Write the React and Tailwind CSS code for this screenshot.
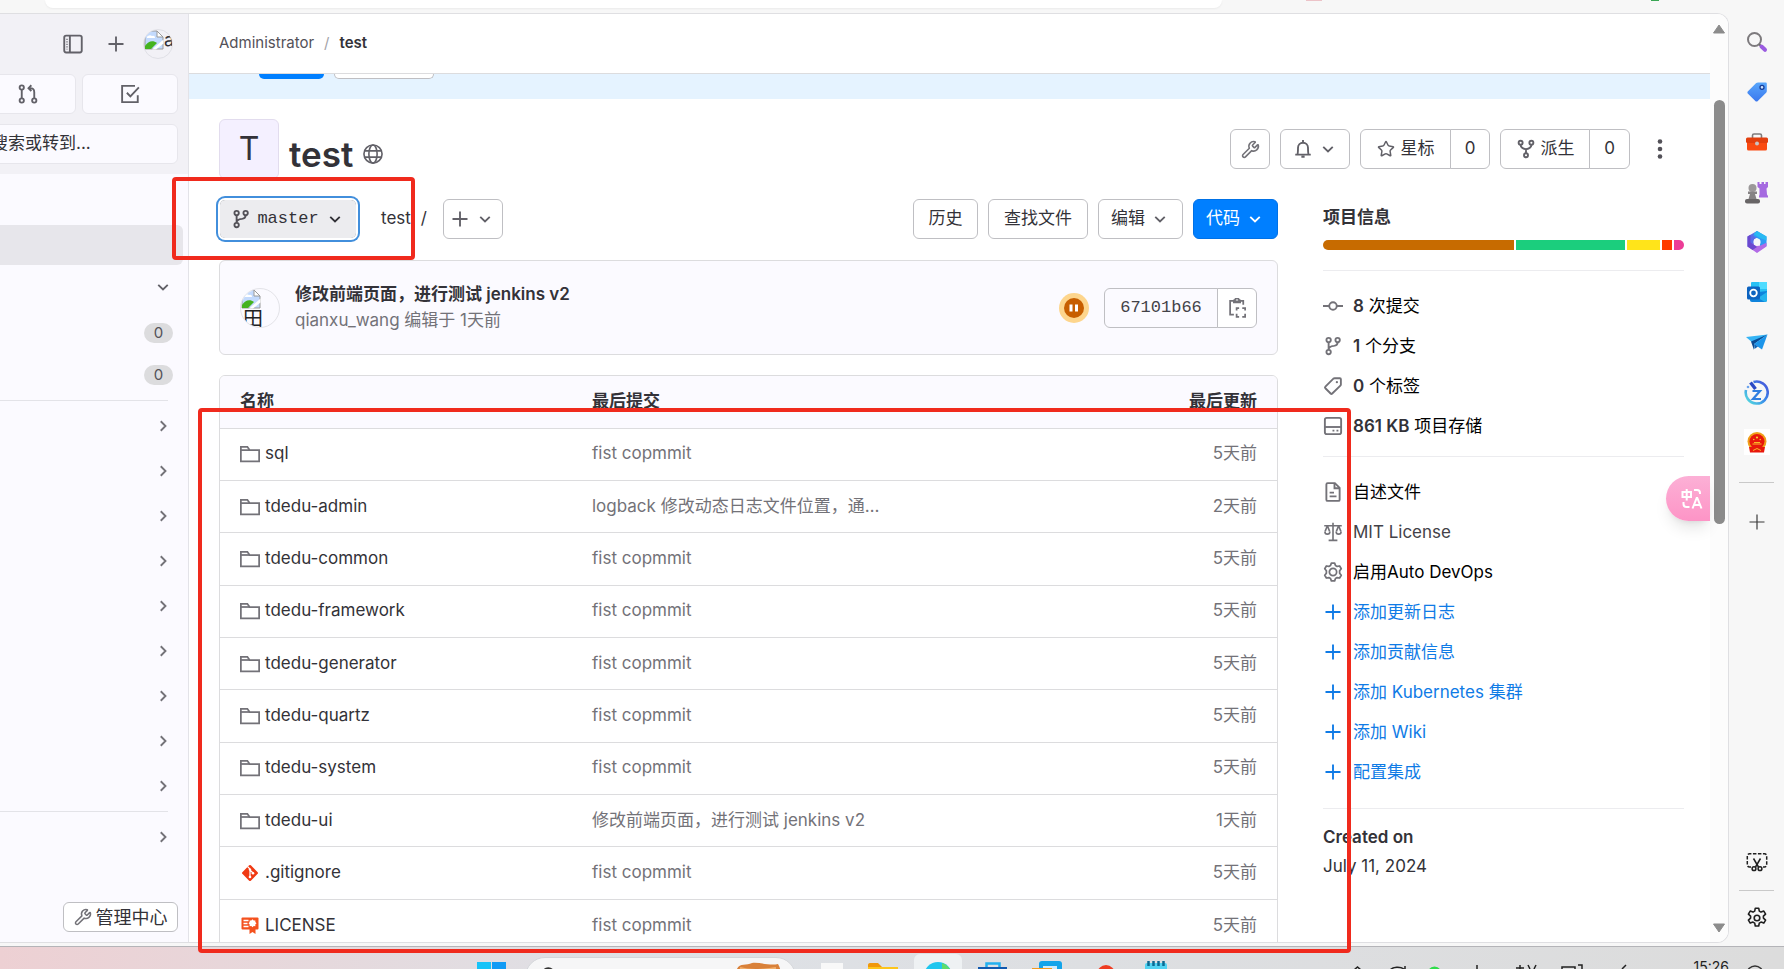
import React from "react";
import { Wrench, Star, Search } from "lucide-react";

function Icon({ children, className = "", size = 20, sw = 1.5 }) {
  return (
    <svg
      width={size}
      height={size}
      viewBox="0 0 16 16"
      fill="none"
      stroke="currentColor"
      strokeWidth={sw}
      className={`shrink-0 ${className}`}
      aria-hidden="true"
    >
      {children}
    </svg>
  );
}

const ChevronDown = ({ className }) => (
  <Icon className={className}>
    <path d="M4.2 6.3 8 10l3.8-3.7" />
  </Icon>
);
const ChevronRight = () => (
  <Icon className="text-[#737278]">
    <path d="M6.2 4.2 10 8l-3.8 3.8" />
  </Icon>
);
const Plus = ({ className }) => (
  <Icon className={className}>
    <path d="M8 2v12M2 8h12" />
  </Icon>
);
const Branch = ({ className }) => (
  <Icon className={className}>
    <circle cx="4.5" cy="3.2" r="1.75" />
    <circle cx="11.7" cy="3.2" r="1.75" />
    <circle cx="4.5" cy="12.8" r="1.75" />
    <path d="M4.5 5v6M11.7 5c0 2.2-1 2.7-3 2.9C6 8.100 4.500 8.800 4.500 11" />
  </Icon>
);
const Fork = ({ className }) => (
  <Icon className={className}>
    <circle cx="3.700" cy="3" r="1.600" />
    <circle cx="12.300" cy="3" r="1.600" />
    <circle cx="8" cy="13" r="1.600" />
    <path d="M3.700 4.600c0 2.400 1.300 3.100 4.300 3.600 3-.5 4.300-1.200 4.300-3.600M8 8.200v3.200" />
  </Icon>
);
const MergeRequest = ({ className }) => (
  <Icon className={className}>
    <circle cx="3" cy="2.800" r="1.700" />
    <circle cx="3" cy="13.200" r="1.700" />
    <circle cx="13" cy="13.200" r="1.700" />
    <path d="M3 4.500v7M13 11.500V6.500c0-2-1-3.200-3.300-3.200H8.500M10.700 1 8.400 3.300l2.300 2.300" />
  </Icon>
);
const Todo = ({ className }) => (
  <Icon className={className}>
    <path d="M12 1.500H1.700v13h12.500V9" />
    <path d="m5.500 7 2.800 2.900 6.800-7.200" />
  </Icon>
);
const Panel = ({ className }) => (
  <Icon className={className}>
    <rect x="1" y="1.250" width="14" height="13.500" rx="1.500" />
    <path d="M5.500 1.500v13" />
    <path d="M3.200 3.800v8.500" strokeWidth="1" strokeDasharray="1 1" />
  </Icon>
);
const Globe = ({ className }) => (
  <Icon className={className} sw={1.3}>
    <circle cx="8" cy="8" r="7.250" />
    <ellipse cx="8" cy="8" rx="3.300" ry="7.250" />
    <path d="M1.200 5.500h13.600M1.200 10.500h13.600" />
  </Icon>
);
const Bell = ({ className }) => (
  <Icon className={className}>
    <path d="M8 .800v1.500M1.800 12.500h12.400M3.500 12.500c.500-1 .500-2 .500-5.500a4 4 0 0 1 8 0c0 3.500 0 4.500.500 5.500M6.700 14.200h2.600" />
  </Icon>
);
const Commit = ({ className }) => (
  <Icon className={className}>
    <circle cx="8" cy="8" r="3" />
    <path d="M0 8h5M11 8h5" />
  </Icon>
);
const Tag = ({ className }) => (
  <Icon className={className}>
    <path d="M9.300 1.750h4.200c.5 0 .8.300.8.800v4.200c0 .4-.1.700-.4 1L7.400 14c-.4.400-.9.400-1.300 0L1.900 9.800c-.4-.4-.4-.9 0-1.300l6.400-6.400c.3-.2.600-.350 1-.350z" />
    <circle cx="11.100" cy="4.900" r=".9" fill="currentColor" stroke="none" />
  </Icon>
);
const Disk = ({ className }) => (
  <Icon className={className}>
    <rect x="1.500" y="1.500" width="13" height="13" rx="1.500" />
    <path d="M1.500 8.800h13" />
    <path d="M7.600 11.700h1.500M10.800 11.700h1.500" />
  </Icon>
);
const Doc = ({ className }) => (
  <Icon className={className}>
    <path d="M9.500.9H3.700c-.5 0-1 .4-1 1v12.200c0 .6.500 1 1 1h8.600c.5 0 1-.4 1-1V4.700z" />
    <path d="M9.200 1v4h4M5.300 8.500h3.500M5.300 11.500h5.500" />
  </Icon>
);
const Scale = ({ className }) => (
  <Icon className={className} sw={1.3}>
    <path d="M8 0.500v14M4.500 14.700h7M1 3h14M3.500 3 1.700 7.500M3.500 3l1.800 4.500M12.500 3l-1.800 4.500M12.500 3l1.800 4.500" />
    <path d="M1.500 7.500a2 2.200 0 0 0 4 0M10.500 7.500a2 2.200 0 0 0 4 0" />
  </Icon>
);
const Gear = ({ className }) => (
  <Icon className={className} sw={1.4}>
    <circle cx="8" cy="8" r="2.900" />
    <path d="M6.700.9h2.600l.7 1.900 1.300.750 2-.350 1.300 2.200-1.300 1.600v2l1.300 1.600-1.300 2.200-2-.350-1.300.750-.7 1.900H6.700L6 13.200l-1.300-.750-2 .350-1.300-2.200L2.700 9V7L1.400 5.400l1.300-2.200 2 .350L6 2.800z" strokeLinejoin="round" />
  </Icon>
);
const Clipboard = ({ className }) => (
  <Icon className={className} sw={1.4}>
    <path d="M5 2.300H2.500v11h3M11 2.300h2v3M5.300 2.700h5.400M5.500 3.500V2c0-.5.500-.6 1-.7a1.600 1.600 0 0 1 3 0c.5.100 1 .200 1 .700v1.500z" />
    <path d="M7.700 10V8h2M12.200 8h2.300v2M14.500 12.500V15h-2.300M9.700 15h-2v-2.500" />
  </Icon>
);
const Folder = () => (
  <Icon className="text-[#737278]" sw={1.4}>
    <path d="M.7 13.800V2.200h5.200l1.800 2.600h7.600v9z" />
    <path d="M.7 4.800h7" />
  </Icon>
);
const GitFile = () => (
  <svg width="20" height="20" viewBox="0 0 20 20" aria-hidden="true" className="shrink-0">
    <rect x="4" y="4" width="12" height="12" rx="1.200" transform="rotate(45 10 10)" fill="#f03a13" />
    <path d="M7.500 3.500 10 6v8.500M10 7l3 3" stroke="#fff" strokeWidth="1.200" fill="none" />
    <circle cx="10" cy="14" r="1.300" fill="#fff" />
    <circle cx="13" cy="10.300" r="1.300" fill="#fff" />
    <circle cx="10" cy="6.600" r="1.200" fill="#fff" />
  </svg>
);
const LicenseFile = () => (
  <svg width="20" height="20" viewBox="0 0 20 20" aria-hidden="true" className="shrink-0">
    <rect x="1.500" y="2.500" width="17" height="12" rx="1" fill="#f4511e" />
    <path d="M3.500 5.500h5M3.500 8.500h4M3.500 11.500h5" stroke="#fff" strokeWidth="1.300" />
    <path d="M9.500 11h6v8l-3-2-3 2z" fill="#f4511e" />
    <path d="m12.500 4.300 1.200 1.200 1.700-.1-.1 1.700 1.200 1.200-1.200 1.200.1 1.700-1.700-.1-1.200 1.200-1.200-1.200-1.700.1.1-1.700-1.200-1.200 1.200-1.200-.1-1.700 1.700.1z" fill="#fff" />
  </svg>
);

const BrokenImage = () => (
  <svg width="20" height="20" viewBox="0 0 20 20" aria-hidden="true" className="shrink-0">
    <path d="M1 1h12l6 6v12H1z" fill="#c3dafd" stroke="#9a9a9a" />
    <path d="M13 1v6h6z" fill="#fff" stroke="#9a9a9a" />
    <path d="M3 8a3 2 0 0 1 5-2 2 2 0 0 1 3 2z" fill="#fff" />
    <path d="M1 19v-3c3-5 8-6 12-3l-6 6z" fill="#45b31f" />
    <path d="m8 19.500 11.500-10v4L12 19.500z" fill="#fff" />
  </svg>
);

const files = [
  ["sql", "fist copmmit", "5天前"],
  ["tdedu-admin", "logback 修改动态日志文件位置，通…", "2天前"],
  ["tdedu-common", "fist copmmit", "5天前"],
  ["tdedu-framework", "fist copmmit", "5天前"],
  ["tdedu-generator", "fist copmmit", "5天前"],
  ["tdedu-quartz", "fist copmmit", "5天前"],
  ["tdedu-system", "fist copmmit", "5天前"],
  ["tdedu-ui", "修改前端页面，进行测试 jenkins v2", "1天前"],
  [".gitignore", "fist copmmit", "5天前", GitFile],
  ["LICENSE", "fist copmmit", "5天前", LicenseFile],
];

function SideNav() {
  return (
    <aside className="flex w-[189px] shrink-0 flex-col overflow-hidden border-r border-[#e3e3e8] bg-[#fbfaff]">
      <div className="bg-[#f2f1f6] pt-[15px] pb-2.5 text-[#626168]">
        <div className="flex h-[30px] items-center justify-end gap-[11px] pr-[15px]">
          <button aria-label="切换侧边栏" className="flex size-8 items-center justify-center">
            <Panel />
          </button>
          <button aria-label="新建" className="flex size-8 items-center justify-center">
            <Plus />
          </button>
          <button className="flex size-[30px] items-start overflow-hidden rounded-full border border-[#e0e0e6] text-[18px] leading-5 text-[#333238]">
            <BrokenImage />a
          </button>
        </div>
        <div className="mt-[15px] mr-2.5 -ml-5 grid grid-cols-2 gap-1.5">
          <button aria-label="合并请求" className="flex h-10 items-center justify-center rounded-md border border-[#e7e6ec] bg-[#fbfaff]">
            <MergeRequest />
          </button>
          <button aria-label="待办事项" className="flex h-10 items-center justify-center rounded-md border border-[#e7e6ec] bg-[#fbfaff]">
            <Todo />
          </button>
        </div>
        <button className="mt-2.5 -ml-5 flex h-10 w-[198px] items-center rounded-md border border-[#e7e6ec] bg-[#fbfaff] pl-2.5 text-[17px] text-[#333238]">
          搜索或转到...
        </button>
      </div>
      <nav className="flex flex-1 flex-col">
        <a href="#project" aria-label="test" className="mt-[51px] mr-[5px] h-10 rounded-r-md bg-[#e7e6eb]" />
        <button aria-label="已置顶" className="mt-0.5 flex h-10 items-center justify-end pr-[15px] text-[#626168]">
          <ChevronDown />
        </button>
        <div className="mt-1.5 flex flex-col gap-0.5">
          {["issues", "merge"].map((k) => (
            <a key={k} href={`#${k}`} className="flex h-10 items-center justify-end pr-[15px]">
              <span className="flex h-5 w-[29px] items-center justify-center rounded-full bg-[#dcdcde] text-[15px] text-[#535158]">0</span>
            </a>
          ))}
        </div>
        <hr className="mt-[5px] mr-5 mb-0.5 border-[#e3e3e8]" />
        {["管理", "计划", "代码", "构建", "安全", "部署", "运维", "监控", "分析"].map((k) => (
          <button key={k} aria-label={k} className="flex h-[45px] items-center justify-end pr-[15px]">
            <ChevronRight />
          </button>
        ))}
        <hr className="mt-[3px] mr-5 mb-0.5 border-[#e3e3e8]" />
        <button aria-label="设置" className="flex h-[45px] items-center justify-end pr-[15px]">
          <ChevronRight />
        </button>
        <a href="#admin" className="mt-auto mr-2.5 mb-2.5 ml-auto flex h-[30px] w-[115px] items-center justify-center gap-1 rounded-md border border-[#bfbfc3] bg-white text-[18px] whitespace-nowrap text-[#333238]">
          <Wrench size={18} className="text-[#737278]" />
          管理中心
        </a>
      </nav>
    </aside>
  );
}

const btn = "flex h-10 items-center justify-center rounded-md border border-[#bfbfc3] bg-white text-[17px] whitespace-nowrap text-[#333238]";

function ProjectHeader() {
  return (
    <div className="flex h-[60px] items-start">
      <div className="flex size-[60px] items-center justify-center rounded-md border border-[#e2dcee] bg-[#f4f0ff] text-[32px] text-[#333238]">T</div>
      <h1 className="ml-2.5 pt-[13px] text-[35px] leading-[44px] font-semibold text-[#333238]">test</h1>
      <Globe className="mt-[25px] ml-2.5 text-[#626168]" />
      <div className="mt-2.5 mr-1 ml-auto flex gap-2.5">
        <button aria-label="设置" className={`${btn} w-10`}>
          <Wrench size={19} className="text-[#737278]" />
        </button>
        <button aria-label="通知" className={`${btn} w-[70px] gap-[5px]`}>
          <Bell className="text-[#626168]" />
          <ChevronDown className="text-[#626168]" />
        </button>
        <div className="flex">
          <button className={`${btn} w-[91px] gap-1.5 rounded-r-none`}>
            <Star size={18} className="text-[#626168]" />
            星标
          </button>
          <a href="#stars" className={`${btn} -ml-px w-10 rounded-l-none`}>0</a>
        </div>
        <div className="flex">
          <button className={`${btn} w-[90px] gap-[5px] rounded-r-none`}>
            <Fork className="text-[#626168]" />
            派生
          </button>
          <a href="#forks" className={`${btn} -ml-px w-[41px] rounded-l-none`}>0</a>
        </div>
        <button aria-label="更多操作" className="flex h-10 w-10 items-center justify-center text-[#535158]">
          <svg width="20" height="20" viewBox="0 0 20 20" fill="currentColor">
            <circle cx="10" cy="2.500" r="2.300" />
            <circle cx="10" cy="10" r="2.300" />
            <circle cx="10" cy="17.500" r="2.300" />
          </svg>
        </button>
      </div>
    </div>
  );
}

function RepoBar() {
  return (
    <div className="flex h-10 items-center">
      <button className="flex h-10 w-[138px] items-center justify-center gap-1.5 rounded-md border border-[#737278] bg-[#ececef] font-['Liberation_Mono',monospace] text-[17px] text-[#333238] ring-3 ring-[#428fdc] outline-2 -outline-offset-1 outline-white">
        <Branch className="text-[#535158]" />
        master
        <ChevronDown />
      </button>
      <div className="ml-6 flex items-center gap-2.5 text-[17px] text-[#333238]">
        <a href="#root">test</a>
        <span>/</span>
      </div>
      <button aria-label="添加" className={`${btn} ml-4 w-[60px] gap-[5px]`}>
        <Plus className="text-[#626168]" />
        <ChevronDown className="text-[#626168]" />
      </button>
      <div className="ml-auto flex gap-2.5">
        <a href="#history" className={`${btn} w-[65px]`}>历史</a>
        <a href="#find" className={`${btn} w-[100px]`}>查找文件</a>
        <button className={`${btn} w-[85px] gap-[5px]`}>
          编辑
          <ChevronDown className="text-[#626168]" />
        </button>
        <button className="flex h-10 w-[85px] items-center justify-center gap-[5px] rounded-md border border-[#0071e6] bg-[#007fff] text-[17px] text-white">
          代码
          <ChevronDown />
        </button>
      </div>
    </div>
  );
}

function CommitCard() {
  return (
    <section className="mt-[21px] flex h-[95px] items-center rounded-md border border-[#dcdcde] bg-[#fbfaff] px-5">
      <div className="flex size-10 flex-col overflow-hidden rounded-full border border-[#e3e3e8] text-[20px] leading-5 text-[#222]">
        <BrokenImage />
        <span className="pl-0.5">田</span>
      </div>
      <div className="ml-[15px] pb-0.5 text-[17px] leading-[26px]">
        <a href="#commit" className="block font-semibold text-[#333238]">修改前端页面，进行测试 jenkins v2</a>
        <p className="text-[#737278]">qianxu_wang 编辑于 1天前</p>
      </div>
      <svg width="30" height="30" viewBox="0 0 30 30" className="ml-auto" role="img" aria-label="流水线等待中">
        <circle cx="15" cy="15" r="15" fill="#fdd58d" />
        <circle cx="15" cy="15" r="10" fill="#c75e00" />
        <path d="M12 11.500v7M17.500 11.500v7" stroke="#fff" strokeWidth="3" />
      </svg>
      <div className="ml-[15px] flex">
        <span className="flex h-10 w-[114px] items-center justify-center rounded-l-md border border-[#bfbfc3] font-['Liberation_Mono',monospace] text-[17px] text-[#434248]">67101b66</span>
        <button aria-label="复制提交 SHA" className="-ml-px flex h-10 w-10 items-center justify-center rounded-r-md border border-[#bfbfc3] bg-white text-[#737278]">
          <Clipboard />
        </button>
      </div>
    </section>
  );
}

function FileTable() {
  return (
    <div className="mt-5 overflow-hidden rounded-t-md border border-[#dcdcde]">
      <table className="h-[576px] w-full table-fixed text-left text-[17px]">
        <thead className="bg-[#fbfaff] font-semibold text-[#333238]">
          <tr className="border-b border-[#dcdcde]">
            <th className="h-[52px] w-[352px] pl-5 font-semibold">名称</th>
            <th className="pl-5 font-semibold">最后提交</th>
            <th className="w-[260px] pr-5 text-right font-semibold">最后更新</th>
          </tr>
        </thead>
        <tbody>
          {files.map(([name, msg, when, FileIcon = Folder]) => (
            <tr key={name} className="border-b border-[#dcdcde]">
              <td className="pl-5">
                <a href={`#${name}`} className="flex items-center gap-[5px] text-[#333238]">
                  <FileIcon />
                  {name}
                </a>
              </td>
              <td className="pl-5 text-[#737278]">{msg}</td>
              <td className="pr-5 text-right text-[#737278]">{when}</td>
            </tr>
          ))}
        </tbody>
      </table>
    </div>
  );
}

const languages = [
  ["Java", "190fr", "#c76b00"],
  ["Vue", "109fr", "#1bce7d"],
  ["JavaScript", "33fr", "#ffe41a"],
  ["HTML", "10fr", "#ff3b00"],
  ["SCSS", "10fr", "#ec3d97"],
];

function InfoRow({ icon: I, color = "text-black", iconColor = "text-[#737278]", children }) {
  return (
    <a href="#info" className={`flex h-10 items-center gap-2.5 text-[17px] ${color}`}>
      <I className={iconColor} />
      <span>{children}</span>
    </a>
  );
}

function ProjectInfo() {
  const add = ["添加更新日志", "添加贡献信息", "添加 Kubernetes 集群", "添加 Wiki", "配置集成"];
  return (
    <aside className="w-[361px] shrink-0 pt-1.5 text-[17px] leading-6 text-[#333238]">
      <h2 className="font-semibold">项目信息</h2>
      <div
        className="mt-[11px] grid h-2.5 gap-0.5 overflow-hidden rounded-full"
        style={{ gridTemplateColumns: languages.map((l) => l[1]).join(" ") }}
      >
        {languages.map(([name, , color]) => (
          <span key={name} title={name} style={{ background: color }} />
        ))}
      </div>
      <hr className="mt-5 mb-[15px] border-[#ececef]" />
      <InfoRow icon={Commit}><b className="font-semibold text-[#333238]">8</b> 次提交</InfoRow>
      <InfoRow icon={Branch}><b className="font-semibold text-[#333238]">1</b> 个分支</InfoRow>
      <InfoRow icon={Tag}><b className="font-semibold text-[#333238]">0</b> 个标签</InfoRow>
      <InfoRow icon={Disk}><b className="font-semibold text-[#333238]">861 KB</b> 项目存储</InfoRow>
      <hr className="mt-2.5 mb-[15px] border-[#ececef]" />
      <InfoRow icon={Doc}>自述文件</InfoRow>
      <InfoRow icon={Scale} color="text-[#434248]">MIT License</InfoRow>
      <InfoRow icon={Gear}>启用Auto DevOps</InfoRow>
      {add.map((t) => (
        <InfoRow key={t} icon={Plus} color="text-[#0f7be6]" iconColor="text-[#0f7be6]">{t}</InfoRow>
      ))}
      <hr className="mt-4 mb-4 border-[#ececef]" />
      <h3 className="font-semibold">Created on</h3>
      <p className="mt-[5px]">July 11, 2024</p>
    </aside>
  );
}

function EdgeBar() {
  const item = "flex h-[50px] items-center justify-center";
  return (
    <aside className="flex w-[55px] shrink-0 flex-col pt-1">
      <button aria-label="搜索" className={item}>
        <svg width="22" height="22" viewBox="0 0 22 22" fill="none">
          <circle cx="8.500" cy="8.500" r="6.500" stroke="#7d7a7d" strokeWidth="2" />
          <path d="m13.200 13.200 2.500 2.500" stroke="#6d6a6d" strokeWidth="2" />
          <path d="m15.500 15.500 3.500 3.300" stroke="#9a5be0" strokeWidth="4" strokeLinecap="round" />
        </svg>
      </button>
      <button aria-label="购物" className={item}>
        <svg width="22" height="22" viewBox="0 0 22 22">
          <defs><linearGradient id="tg" x1="0" y1="0" x2="0" y2="1"><stop stopColor="#58a6fb" /><stop offset="1" stopColor="#3b78ee" /></linearGradient></defs>
          <path d="M12 1.500h7.500c.8 0 1.300.5 1.300 1.300V10c0 .7-.2 1.200-.7 1.700l-8.300 8.300c-.8.800-1.700.8-2.500 0L2 12.800c-.8-.8-.8-1.700 0-2.500l8.200-8.200c.5-.4 1.100-.6 1.800-.6z" fill="url(#tg)" />
          <circle cx="16" cy="6.300" r="2" fill="#cfe4ff" stroke="#163c96" strokeWidth="1.300" />
        </svg>
      </button>
      <button aria-label="工具" className={item}>
        <svg width="22" height="20" viewBox="0 0 22 20">
          <path d="M6.500 6V3.500c0-1 .5-1.500 1.500-1.500h6c1 0 1.500.5 1.500 1.500V6" fill="none" stroke="#7f7b7b" strokeWidth="1.600" />
          <rect x="1" y="8" width="20" height="10.500" rx="1.500" fill="#fa4b12" />
          <rect x="0" y="5.500" width="22" height="5.500" rx="1.500" fill="#e23f0e" />
          <circle cx="11" cy="11.500" r="2" fill="#c9c3c3" />
        </svg>
      </button>
      <button aria-label="游戏" className={item}>
        <svg width="23" height="23" viewBox="0 0 23 23">
          <path d="M12.500 1h2v2h2V1h2.500v2h1.500V1H23v5l-1.500 1.500.5 6 1 1.500v1.500h-9V15l.5-1.500V7.500L12.500 6z" fill="#a56ae0" />
          <circle cx="7.500" cy="7" r="4" fill="#9b9899" />
          <path d="M3 10.500h9v2.500h-2l1.500 5h-8l1.500-5H3z" fill="#858283" />
          <rect x="0" y="18" width="15" height="4.500" rx="2" fill="#686566" />
        </svg>
      </button>
      <button aria-label="Microsoft 365" className={item}>
        <svg width="22" height="24" viewBox="0 0 22 24">
          <path d="M11 1 1.500 6.500v10L8 20V9.500l6-3.500z" fill="#5a6be8" />
          <path d="m11 1 9.500 5.500V16L14 19.500V10L7 5.500z" fill="#2f9af5" />
          <path d="M1.500 16.500 11 23l9.500-6.500v-3.800l-6 2.800-4 .5L6 13.500z" fill="#b26be6" />
          <path d="m11 1 9.500 5.500v4L14 8 7.500 4z" fill="#29b9f2" />
          <path d="m1.500 6.500 3-1.800v7.800L11 17l-4.500 3-5-3.500z" fill="#6b48cf" />
          <circle cx="11" cy="12" r="3.600" fill="#f6f6f8" />
        </svg>
      </button>
      <button aria-label="Outlook" className={item}>
        <svg width="22" height="22" viewBox="0 0 22 22">
          <rect x="5" y="1" width="16" height="12" rx="1" fill="#28c0f4" />
          <rect x="13" y="1" width="8" height="7" fill="#4fdcff" />
          <path d="M4 12 21 10v9c0 1-.6 2-2 2H6c-1.300 0-2-1-2-2z" fill="#0f84dc" />
          <path d="m21 11-9 6 7 4c1.500 0 2-1 2-2z" fill="#24b4ee" />
          <rect x="1" y="5.500" width="13" height="13" rx="1.500" fill="#0c63c0" />
          <circle cx="7.500" cy="12" r="3.300" fill="none" stroke="#fff" strokeWidth="1.800" />
        </svg>
      </button>
      <button aria-label="发送" className={item}>
        <svg width="22" height="20" viewBox="0 0 22 20">
          <path d="M0 5 21.500 2.500 8 12z" fill="#35b4f5" />
          <path d="M5 9.500 21.500 2.500 8 12v6z" fill="#0b4a92" />
          <path d="m8 12 13.500-9.500L16 17.500z" fill="#1c95ea" />
          <path d="m8 12 4 2.500L8.500 17z" fill="#0c62b5" />
        </svg>
      </button>
      <button aria-label="Z" className={item}>
        <svg width="25" height="25" viewBox="0 0 25 25" fill="none">
          <defs><linearGradient id="zg" x1="0" y1="1" x2="1" y2="0"><stop stopColor="#58e3dd" /><stop offset=".5" stopColor="#3a8bea" /><stop offset="1" stopColor="#4950d8" /></linearGradient></defs>
          <path d="M9.500 2A11 11 0 1 1 2 10" stroke="url(#zg)" strokeWidth="2.600" />
          <path d="m6.500 2.500 5 6.500" stroke="#2b49c4" strokeWidth="3.400" />
          <circle cx="4" cy="7" r="1.300" fill="#6ea5ee" />
          <path d="M8.500 11h7.500l-7 8h8" stroke="#2f7fe0" strokeWidth="2.200" />
        </svg>
      </button>
      <button aria-label="政务服务" className={item}>
        <span className="flex size-[26px] items-center justify-center bg-white">
          <svg width="20" height="21" viewBox="0 0 20 21">
            <circle cx="10" cy="9.500" r="9.500" fill="#f0a01a" />
            <circle cx="10" cy="9.500" r="7.500" fill="#e8180c" />
            <path d="M2 15h16l-1 5.500H3z" fill="#e8180c" />
            <path d="M5.500 12h9M7 10.500h6M6 18.500l4-2 4 2" stroke="#f9b92a" strokeWidth="1" fill="none" />
            <circle cx="10" cy="5.500" r="1.100" fill="#fbd33a" />
            <circle cx="6.800" cy="7.500" r=".7" fill="#fbd33a" />
            <circle cx="13.200" cy="7.500" r=".7" fill="#fbd33a" />
          </svg>
        </span>
      </button>
      <hr className="mx-[10px] mt-[15px] mb-[14px] border-[#c9c9c9]" />
      <button aria-label="自定义" className={item}>
        <svg width="16" height="16" viewBox="0 0 16 16" stroke="#3b3b3b" strokeWidth="1.200"><path d="M8 .5v15M.5 8h15" /></svg>
      </button>
      <div className="mt-auto">
        <button aria-label="截图" className="flex h-[56px] w-full items-center justify-center">
          <svg width="22" height="20" viewBox="0 0 22 20" fill="none" stroke="#1f1f1f" strokeWidth="1.500">
            <path d="M5 15H3.500A2.200 2.200 0 0 1 1.300 13V4A2.200 2.200 0 0 1 3.500 1.800h15A2.200 2.200 0 0 1 20.700 4v9a2.200 2.200 0 0 1-2.200 2H17" strokeDasharray="3.500 1.500" />
            <path d="m7.500 6.500 5 8.500M14.500 6.500l-5 8.500" />
            <circle cx="8" cy="16.700" r="1.900" />
            <circle cx="14" cy="16.700" r="1.900" />
          </svg>
        </button>
        <hr className="mx-[10px] border-[#c9c9c9]" />
        <button aria-label="设置" className="flex h-[52px] w-full items-center justify-center pt-0.5">
          <svg width="22" height="22" viewBox="0 0 22 22" fill="none" stroke="#1f1f1f" strokeWidth="1.600" strokeLinejoin="round">
            <circle cx="11" cy="11" r="2.800" />
            <path d="M9.300 1.200h3.400l.6 2.900 1.700 1 2.800-1 1.800 3-2.200 2v2l2.200 2-1.800 3-2.800-1-1.700 1-.6 2.900H9.300l-.6-2.900-1.700-1-2.800 1-1.800-3 2.200-2v-2l-2.200-2 1.800-3 2.800 1 1.700-1z" />
          </svg>
        </button>
      </div>
    </aside>
  );
}

function Taskbar() {
  return (
    <footer className="h-[23px] shrink-0 overflow-hidden border-t border-[#b4b4b8] bg-linear-to-r from-[#edd0d3] via-[#dee1e6] via-35% to-[#dcdcdc]">
      <div className="flex items-start">
        <button aria-label="开始" className="mt-[15px] ml-[477px]">
          <svg width="29" height="29" viewBox="0 0 29 29">
            <path d="M0 0h14v14H0zM0 15h14v14H0z" fill="#17c3f8" />
            <path d="M15 0h14v14H15zM15 15h14v14H15z" fill="#119bf5" />
          </svg>
        </button>
        <div className="mt-2.5 ml-[19px] flex h-10 w-[271px] items-start overflow-hidden rounded-full border border-[#d4d6da] bg-[#f6f6f7] pl-3.5">
          <Search size={18} strokeWidth={2.5} className="mt-2 text-[#333]" />
          <input aria-label="任务栏搜索" defaultValue="Hub" className="mt-1.5 ml-3 w-[140px] text-[15px] text-[#333] outline-none" />
          <svg width="48" height="30" viewBox="0 0 48 30" className="mt-1 ml-6">
            <path d="M2 10C4 0 12 4 18 1c8-1 18 3 26 1 4 6 3 14 2 28H0z" fill="#d9813a" />
            <path d="M6 6c10 3 26 2 36 0" stroke="#f2b06e" strokeWidth="2" fill="none" />
          </svg>
        </div>
        <span className="mt-4 ml-[25px] h-5 w-[22px] bg-[#f8f8f8]" />
        <svg width="30" height="24" viewBox="0 0 30 24" className="mt-4 ml-[25px]">
          <path d="M0 2c0-1 .5-2 2-2h8l4 4H0z" fill="#f0980c" />
          <path d="M0 4h30v20H0z" fill="#fdc51c" />
        </svg>
        <span className="mt-[7px] ml-4 flex h-10 w-12 justify-center rounded-md bg-[#eef1f3] pt-2">
          <svg width="28" height="28" viewBox="0 0 28 28">
            <circle cx="14" cy="14" r="14" fill="#1fc6ee" />
            <path d="M18 1a14 14 0 0 1 10 13H18z" fill="#5fdc6a" />
          </svg>
        </span>
        <svg width="29" height="24" viewBox="0 0 29 24" className="mt-[15px] ml-4">
          <path d="M8.500 6V1.500h13V6" stroke="#22b0f0" strokeWidth="2.500" fill="none" />
          <path d="M0 5h29v19H0z" fill="#1259ae" />
        </svg>
        <svg width="30" height="24" viewBox="0 0 30 24" className="mt-3.5 ml-[25px]">
          <rect x="7" width="23" height="24" rx="3" fill="#12a4ea" />
          <path d="M11 5h14v10H11z" fill="#cfeafa" />
          <path d="M0 7h20v17H0z" fill="#f29a1f" />
        </svg>
        <span className="mt-[18px] ml-[35px] size-[18px] rounded-full bg-[#ef3c22]" />
        <svg width="22" height="24" viewBox="0 0 22 24" className="mt-3.5 ml-[30px]">
          <rect y="2" width="22" height="22" rx="2" fill="#53d3f2" />
          <path d="M3.500 0v5M8.500 0v5M13.500 0v5M18.500 0v5" stroke="#0b6a92" strokeWidth="2.500" />
        </svg>
        <svg width="300" height="22" viewBox="1350 0 300 22" fill="none" stroke="#222" strokeWidth="1.500" className="ml-auto">
          <path d="m1352 23 3.500-3 3.500 3" />
          <path d="M1388 23a9 6 0 0 1 14-1M1403 19v3" />
          <path d="M1428 23a5 4 0 0 1 9 0" stroke="#2fdc4b" strokeWidth="2.500" />
          <path d="M1475 18v4M1518 18v4M1514 21h8M1526 18l2 4M1534 18l-2 4" />
          <path d="M1560 22v-2h13v2M1576 18h4v4M1620 22l4-4" />
        </svg>
        <time className="mt-2.5 ml-[42px] text-[14px] leading-5 text-[#222]">15:26</time>
        <svg width="20" height="20" viewBox="0 0 20 20" fill="none" stroke="#333" strokeWidth="1.500" className="mt-[18px] mr-[19px] ml-4">
          <circle cx="10" cy="9" r="8" />
        </svg>
      </div>
    </footer>
  );
}

export default function App() {
  return (
    <div className="relative flex h-screen flex-col overflow-hidden bg-[#f7f7f7] font-['Inter','Noto_Sans_CJK_SC',sans-serif]">
      <div className="flex h-[13px] shrink-0 items-start">
        <div className="ml-[45px] h-2 w-[66%] rounded-b-xl bg-white shadow-xs" />
        <span className="ml-[84px] h-px w-4 bg-[#ecc3c8]" />
        <span className="ml-auto mr-[125px] h-px w-2 bg-[#3aa655]" />
      </div>
      <div className="flex min-h-0 flex-1">
        <div className="relative flex min-w-0 flex-1 overflow-hidden rounded-r-xl border border-l-0 border-[#dfdfe2] bg-white">
          <SideNav />
          <main className="flex min-w-0 flex-1 flex-col overflow-hidden">
            <nav className="flex h-[60px] shrink-0 items-center gap-2.5 border-b border-[#dcdcde] px-[30px] text-[15px] text-[#535158]">
              <a href="#admin-user">Administrator</a>
              <span className="text-[#a4a3a8]">/</span>
              <a href="#test" className="font-semibold text-[#333238]">test</a>
            </nav>
            <div className="flex h-[25px] shrink-0 gap-2.5 bg-[#e5f3ff] pl-[70px]">
              <span className="h-[5px] w-[65px] rounded-b-md bg-[#007fff]" />
              <span className="h-[5px] w-[100px] rounded-b-md border border-t-0 border-[#bfbfc3] bg-white" />
            </div>
            <div className="pt-5 pr-[26px] pl-[30px]">
              <ProjectHeader />
              <div className="mt-5 flex gap-[45px]">
                <div className="min-w-0 flex-1">
                  <RepoBar />
                  <CommitCard />
                  <FileTable />
                </div>
                <ProjectInfo />
              </div>
            </div>
          </main>
          <div className="flex w-[18px] shrink-0 flex-col items-center bg-[#fcfcfc] pt-2.5 pb-[9px]">
            <svg width="12" height="10" viewBox="0 0 12 10"><path d="M6 1 11.500 9H.5z" fill="#8b8b8b" stroke="#8b8b8b" strokeLinejoin="round" /></svg>
            <div className="mt-[66px] h-[424px] w-[11px] rounded-full bg-[#8b8b8b]" />
            <svg width="12" height="10" viewBox="0 0 12 10" className="mt-auto"><path d="M6 9 .5 1h11z" fill="#8b8b8b" stroke="#8b8b8b" strokeLinejoin="round" /></svg>
          </div>
          <button aria-label="翻译" className="absolute top-[462px] right-[18px] flex h-[45px] w-[44px] items-center justify-center rounded-l-full bg-linear-to-b from-[#fcb0d6] to-[#fd94c6] pl-2 shadow-lg">
            <svg width="22" height="22" viewBox="0 0 22 22" fill="none" stroke="#fff" strokeWidth="2">
              <path d="M1.500 4h8.500v5H1.500zM5.700 1v11.500M13 2h3c2 0 3 1 3 3v1M2.500 14v2c0 2 1 3 3 3h3M11.500 20.500 15.700 10h.6l4.200 10.500M13 17h6" />
            </svg>
          </button>
        </div>
        <EdgeBar />
      </div>
      <div className="h-[3px] shrink-0" />
      <Taskbar />
      <div className="pointer-events-none absolute top-[177px] left-[172px] h-[83px] w-[243px] rounded-sm border-4 border-[#f02a1d]" />
      <div className="pointer-events-none absolute top-[408px] left-[198px] h-[545px] w-[1153px] rounded-sm border-4 border-[#f02a1d]" />
    </div>
  );
}
